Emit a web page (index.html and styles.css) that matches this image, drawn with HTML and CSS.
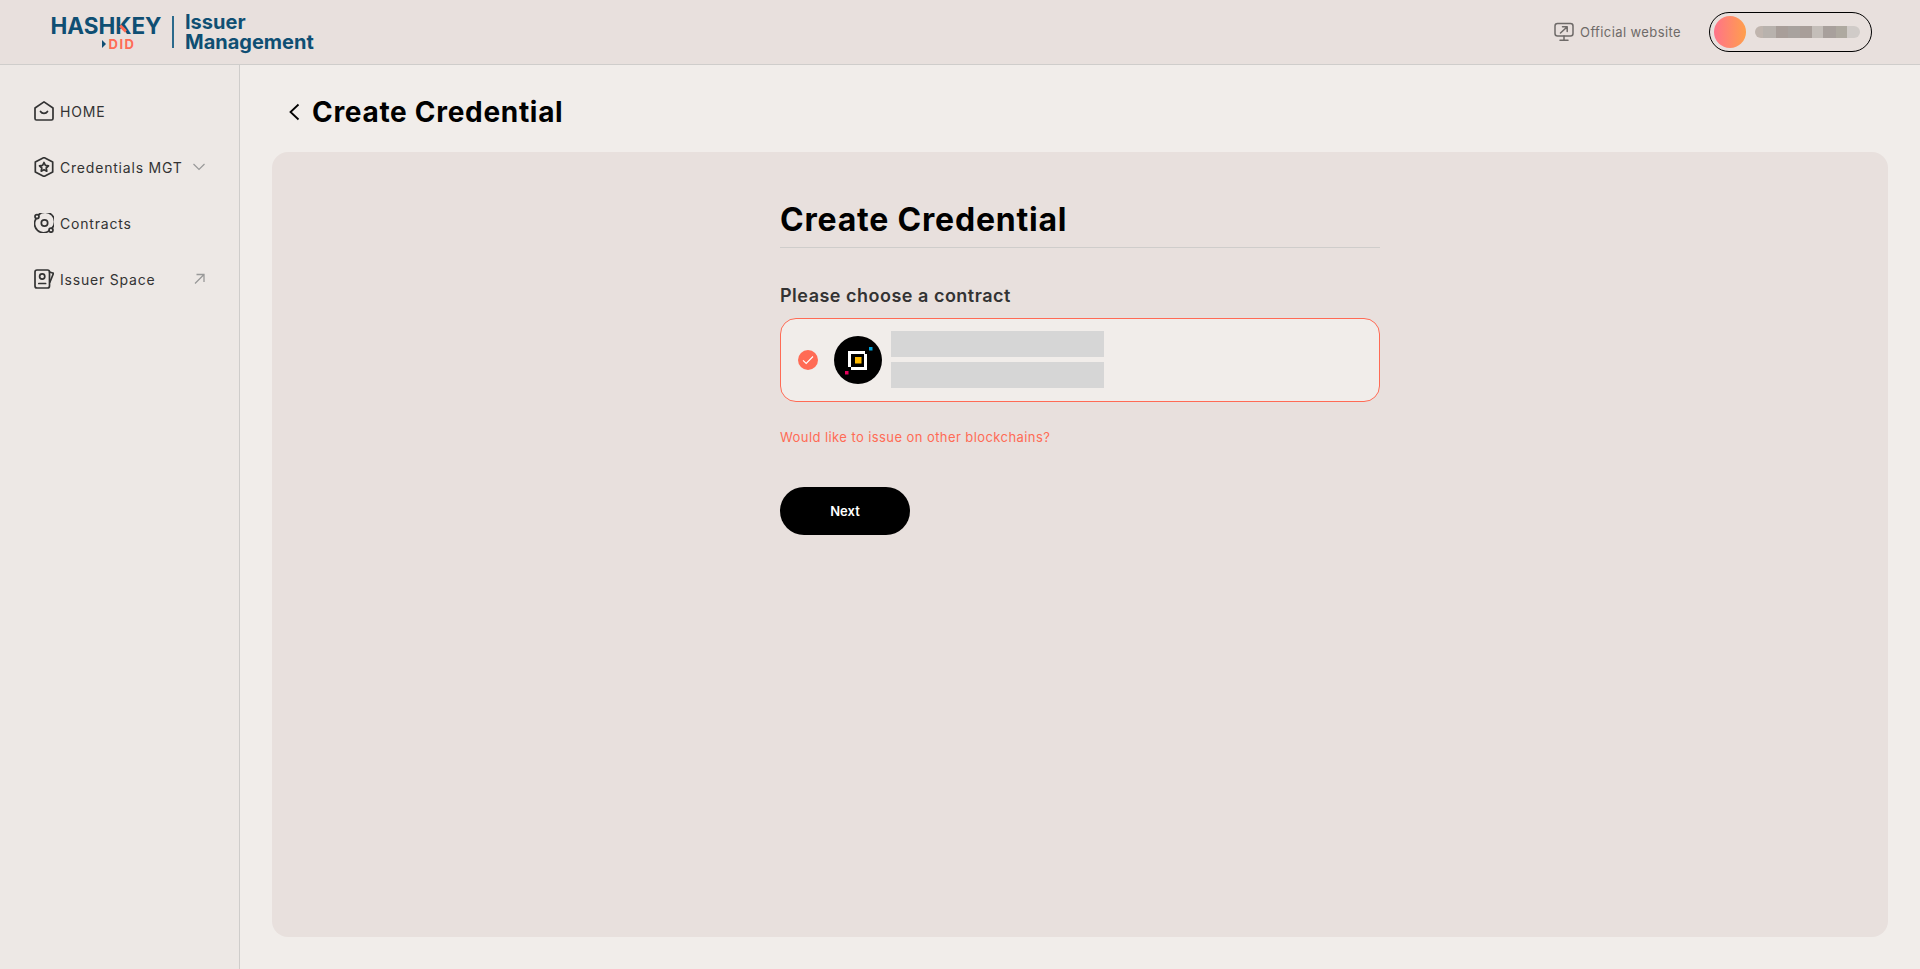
FILE: index.html
```html
<!DOCTYPE html>
<html lang="en">
<head>
    <meta charset="UTF-8">
    <meta name="viewport" content="width=device-width, initial-scale=1.0">
    <title>Create Credential</title>
    <link rel="stylesheet" href="styles.css">
</head>
<body>

    <header class="topbar">
        <div class="brand">
            <div class="brand-logo">
                <span class="logo-word">HASHKEY<i class="logo-leg"></i></span>
                <span class="logo-did"><i class="logo-arrow"></i>DID</span>
            </div>
            <span class="brand-sep"></span>
            <span class="brand-title">Issuer<br>Management</span>
        </div>
        <div class="topbar-right">
            <a class="site-link" href="#">
                <svg width="20" height="20" viewBox="0 0 20 20" fill="none" stroke="#6e6a68" stroke-width="1.5" stroke-linecap="round" stroke-linejoin="round">
                    <rect x="1" y="1.500" width="18" height="12.500" rx="2.500"/>
                    <path d="M6.500 11 13 5M8.500 4.800H13.200V9.500M10 14v4M6 18.300h8"/>
                </svg>
                Official website
            </a>
            <div class="account">
                <span class="avatar"></span>
                <span class="account-blur"></span>
            </div>
        </div>
    </header>

    <div class="layout">
        <nav class="sidebar">
            <a class="nav-item" href="#">
                <svg class="nav-icon" viewBox="0 0 20 20" fill="none" stroke="#333" stroke-width="1.700" stroke-linecap="round" stroke-linejoin="round">
                    <path d="M1 7 10 .9 19 7v10.500a1.500 1.500 0 0 1-1.500 1.500h-15A1.500 1.500 0 0 1 1 17.500z"/>
                    <path d="M6.500 10.500c1.500 2.500 5.500 2.500 7 0"/>
                </svg>
                <span>HOME</span>
            </a>
            <a class="nav-item" href="#">
                <svg class="nav-icon" viewBox="0 0 20 20" fill="none" stroke="#333" stroke-width="1.700" stroke-linecap="round" stroke-linejoin="round">
                    <path d="M10 .5 18.700 5V15L10 19.500 1.300 15V5z"/>
                    <path d="M10 5.500 11.400 8.400 14.500 8.900 12.200 11 12.800 14.200 10 12.700 7.200 14.200 7.800 11 5.500 8.900 8.600 8.400z"/>
                </svg>
                <span>Credentials MGT</span>
                <svg class="nav-mark" viewBox="0 0 12 12" fill="none" stroke="#999" stroke-width="1.200">
                    <path d="M.5 3 6 8.500 11.500 3"/>
                </svg>
            </a>
            <a class="nav-item" href="#">
                <svg class="nav-icon" viewBox="0 0 20 20" fill="none" stroke="#333" stroke-width="1.700" stroke-linecap="round">
                    <path d="M4.500 1.900A9 9 0 0 1 17.800 15.400M15 17.900A9 9 0 0 1 1.900 6"/>
                    <circle cx="10.500" cy="10" r="3.200"/>
                    <circle cx="3" cy="3.600" r="2"/>
                    <circle cx="17" cy="17.200" r="2"/>
                </svg>
                <span>Contracts</span>
            </a>
            <a class="nav-item" href="#">
                <svg class="nav-icon" viewBox="0 0 20 20" fill="none" stroke="#333" stroke-width="1.700" stroke-linecap="round" stroke-linejoin="round">
                    <rect x="1" y="1" width="14.500" height="18" rx="2"/>
                    <path d="M15.500 3 19.500 4.200 16 13"/>
                    <circle cx="8.200" cy="7.500" r="2.600"/>
                    <path d="M4.800 14.500h6.800"/>
                </svg>
                <span>Issuer Space</span>
                <svg class="nav-mark" viewBox="0 0 12 12" fill="none" stroke="#999" stroke-width="1.300">
                    <path d="M2 10.500 10.500 2M3.500 1.500h7.500V9"/>
                </svg>
            </a>
        </nav>

        <main class="content">
            <div class="page-head">
                <svg class="back-icon" viewBox="0 0 12 18" fill="none" stroke="#000" stroke-width="1.800">
                    <path d="M10.500 1.500 2.500 9l8 7.500"/>
                </svg>
                <h1 class="page-title">Create Credential</h1>
            </div>

            <section class="card">
                <div class="form-col">
                    <h2 class="form-title">Create Credential</h2>
                    <h3 class="form-label">Please choose a contract</h3>

                    <div class="contract">
                        <span class="check">
                            <svg width="12" height="10" viewBox="0 0 12 10" fill="none" stroke="#fff" stroke-width="1.100">
                                <path d="M1 5.300 4.200 8.500 11 1.500"/>
                            </svg>
                        </span>
                        <svg class="chain-logo" viewBox="0 0 48 48">
                            <circle cx="24" cy="24" r="24" fill="#000"/>
                            <path d="M31 16.500H15.500V31" fill="none" stroke="#fff" stroke-width="3"/>
                            <path d="M31.500 18V32.500H17" fill="none" stroke="#fff" stroke-width="3"/>
                            <rect x="21" y="21" width="6.500" height="6.500" fill="#fdb900"/>
                            <rect x="35" y="11" width="3.500" height="3.500" fill="#00a3d9"/>
                            <rect x="11" y="35" width="3.500" height="3.500" fill="#e6005c"/>
                        </svg>
                        <div class="contract-lines">
                            <span class="contract-line"></span>
                            <span class="contract-line"></span>
                        </div>
                    </div>

                    <a class="other-link" href="#">Would like to issue on other blockchains?</a>

                    <button class="next-btn" type="button">Next</button>
                </div>
            </section>
        </main>
    </div>

</body>
</html>
```

FILE: styles.css
```css
* {
    box-sizing: border-box;
}
html, body {
    height: 100%;
}
body {
    margin: 0;
    display: flex;
    flex-direction: column;
    background: #f1edea;
    color: #333;
    font-family: Inter, "Liberation Sans", sans-serif;
    overflow: hidden;
}
a {
    color: inherit;
    text-decoration: none;
}

/* top bar */
.topbar {
    height: 65px;
    flex: none;
    display: flex;
    align-items: center;
    justify-content: space-between;
    padding: 0 48px 0 50px;
    background: #e8e0dd;
    border-bottom: 1px solid #cfcdcb;
}
.brand {
    display: flex;
    align-items: center;
}
.brand-logo {
    width: 112px;
    display: flex;
    flex-direction: column;
    align-items: center;
    margin-top: 3px;
}
.logo-word {
    position: relative;
    font-weight: 700;
    font-size: 22.500px;
    line-height: 20px;
    color: #0f4f73;
}
.logo-leg {
    position: absolute;
    left: 69px;
    top: 11px;
    width: 8px;
    height: 3px;
    background: #ff6b55;
    transform: rotate(45deg);
}
.logo-did {
    display: flex;
    align-items: center;
    gap: 3px;
    margin-left: 25px;
    font-weight: 700;
    font-size: 13px;
    line-height: 16px;
    letter-spacing: 1.500px;
    color: #ff6b55;
}
.logo-arrow {
    width: 0;
    height: 0;
    border-left: 4px solid #0f4f73;
    border-top: 4px solid transparent;
    border-bottom: 4px solid transparent;
}
.brand-sep {
    width: 2px;
    height: 32px;
    margin: 0 11px 0 10px;
    background: #2b6a8c;
}
.brand-title {
    font-weight: 700;
    font-size: 20px;
    line-height: 20px;
    color: #0f4f73;
}
.topbar-right {
    display: flex;
    align-items: center;
    gap: 28px;
}
.site-link {
    display: flex;
    align-items: center;
    gap: 6px;
    font-size: 13px;
    letter-spacing: 0.400px;
    color: #6e6a68;
}
.account {
    width: 163px;
    height: 40px;
    display: flex;
    align-items: center;
    gap: 9px;
    padding-left: 4px;
    border: 1.500px solid #000;
    border-radius: 20px;
}
.avatar {
    width: 32px;
    height: 32px;
    border-radius: 50%;
    background: linear-gradient(90deg, #ff7389, #ff9f4c);
}
.account-blur {
    width: 105px;
    height: 12px;
    border-radius: 6px;
    background: linear-gradient(90deg, #c0b5ae 0 8%, #b8b2ad 8% 20%, #a89e99 20% 31%, #a8a29e 31% 43%, #a89e99 43% 54%, #c4beb9 54% 65%, #a8a09c 65% 77%, #aea9a0 77% 88%, #d0cbc8 88% 100%);
}

.layout {
    flex: 1;
    display: flex;
    min-height: 0;
}

/* sidebar */
.sidebar {
    width: 240px;
    flex: none;
    padding-top: 26px;
    display: flex;
    flex-direction: column;
    gap: 16px;
    background: #ede8e5;
    border-right: 1px solid #cfcdcb;
}
.nav-item {
    height: 40px;
    display: flex;
    align-items: center;
    gap: 6px;
    padding-left: 34px;
    font-size: 14px;
    letter-spacing: 0.800px;
    color: #333;
}
.nav-icon {
    width: 20px;
    height: 20px;
    flex: none;
}
.nav-mark {
    width: 12px;
    height: 12px;
    margin-left: auto;
    margin-right: 34px;
}

/* content */
.content {
    flex: 1;
    display: flex;
    flex-direction: column;
    padding: 0 32px 32px;
    min-width: 0;
}
.page-head {
    height: 87px;
    flex: none;
    display: flex;
    align-items: center;
    gap: 12px;
    padding: 6px 0 0 16px;
}
.back-icon {
    width: 12px;
    height: 18px;
}
.page-title {
    margin: 0;
    font-weight: 700;
    font-size: 28px;
    letter-spacing: 0.700px;
    color: #000;
}
.card {
    flex: 1;
    display: flex;
    padding-left: 508px;
    background: #e8e0dd;
    border-radius: 16px;
}
.form-col {
    width: 600px;
    padding-top: 45px;
    display: flex;
    flex-direction: column;
    align-items: flex-start;
}
.form-title {
    width: 100%;
    height: 51px;
    margin: 0 0 37px;
    border-bottom: 1px solid #cfcdcb;
    font-weight: 700;
    font-size: 32px;
    line-height: 46px;
    letter-spacing: 0.800px;
    color: #000;
}
.form-label {
    margin: 0 0 11px;
    font-weight: 600;
    font-size: 18px;
    line-height: 22px;
    letter-spacing: 0.500px;
    color: #333;
}
.contract {
    width: 100%;
    height: 84px;
    display: flex;
    align-items: center;
    padding-left: 17px;
    background: #f1edea;
    border: 1px solid #ff6b55;
    border-radius: 16px;
}
.check {
    width: 20px;
    height: 20px;
    display: flex;
    align-items: center;
    justify-content: center;
    border-radius: 50%;
    background: #ff6b55;
}
.chain-logo {
    width: 48px;
    height: 48px;
    margin-left: 16px;
}
.contract-lines {
    margin: 0 0 2px 9px;
    display: flex;
    flex-direction: column;
    gap: 5px;
}
.contract-line {
    width: 213px;
    height: 26px;
    background: #d6d6d6;
}
.other-link {
    margin-top: 26px;
    font-size: 13px;
    line-height: 18px;
    letter-spacing: 0.420px;
    color: #ff6b55;
}
.next-btn {
    width: 130px;
    height: 48px;
    margin-top: 41px;
    border: none;
    border-radius: 24px;
    background: #000;
    color: #fff;
    font-family: Inter, "Liberation Sans", sans-serif;
    font-weight: 600;
    font-size: 13px;
    cursor: pointer;
}
```
